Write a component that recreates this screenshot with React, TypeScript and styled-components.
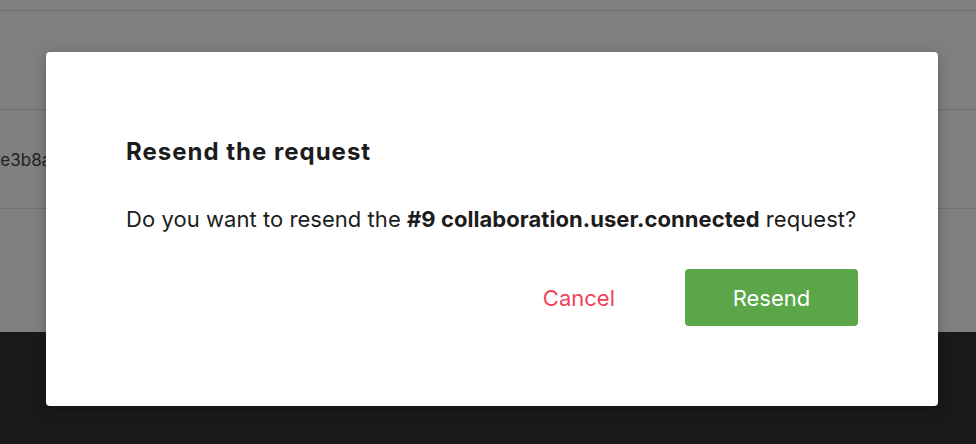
import React from 'react';
import styled, { createGlobalStyle } from 'styled-components';

const GlobalStyle = createGlobalStyle`
  html, body {
    margin: 0;
    padding: 0;
    background: #333333;
    font-family: Inter, "Noto Sans", sans-serif;
    -webkit-font-smoothing: antialiased;
  }
`;

const Page = styled.div`
  position: relative;
  width: 976px;
  height: 444px;
  overflow: hidden;
  display: flex;
  flex-direction: column;
`;

const RequestList = styled.div`
  background: #ffffff;
  height: 332px;
  display: flex;
  flex-direction: column;
  padding-top: 10px;
  box-sizing: border-box;
`;

const Row = styled.div`
  height: 99px;
  border-top: 1px solid #dedede;
  box-sizing: border-box;
  display: flex;
  align-items: center;
  font-size: 17px;
  color: #444444;
  white-space: nowrap;
`;

const HashCell = styled.span`
  margin-left: -10px;
  margin-top: 2px;
`;

const Footer = styled.div`
  flex: 1;
  background: #333333;
`;

const Overlay = styled.div`
  position: absolute;
  inset: 0;
  background: rgba(0, 0, 0, 0.5);
  padding: 52px 38px 38px 46px;
  box-sizing: border-box;
`;

const Modal = styled.div`
  background: #ffffff;
  border-radius: 4px;
  box-shadow: 0 3px 12px rgba(0, 0, 0, 0.25);
  height: 354px;
  box-sizing: border-box;
  padding: 80px;
  display: flex;
  flex-direction: column;
`;

const Title = styled.h2`
  margin: 0;
  font-size: 24px;
  letter-spacing: 1px;
  line-height: 40px;
  font-weight: 700;
  color: #1c1c1c;
`;

const Message = styled.p`
  margin: 33px 0 0;
  font-size: 22px;
  letter-spacing: 0.05px;
  line-height: 28px;
  color: #1c1c1c;

  b {
    font-weight: 700;
  }
`;

const Actions = styled.div`
  margin-top: auto;
  display: flex;
  justify-content: flex-end;
  align-items: center;
  gap: 70px;
`;

const Button = styled.button<{ $primary?: boolean }>`
  font-family: inherit;
  font-size: 22px;
  border: none;
  border-radius: 4px;
  cursor: pointer;
  height: 57px;
  padding: 0;
  width: ${({ $primary }) => ($primary ? '173px' : 'auto')};
  background: ${({ $primary }) => ($primary ? '#5aa649' : 'transparent')};
  color: ${({ $primary }) => ($primary ? '#ffffff' : '#f0435d')};
`;

const App = () => {
  return (
    <>
      <GlobalStyle />
      <Page>
        <RequestList>
          <Row />
          <Row>
            <HashCell>5e3b8a1c7d</HashCell>
          </Row>
          <Row />
        </RequestList>
        <Footer />
        <Overlay>
          <Modal>
            <Title>Resend the request</Title>
            <Message>
              Do you want to resend the <b>#9 collaboration.user.connected</b> request?
            </Message>
            <Actions>
              <Button>Cancel</Button>
              <Button $primary>Resend</Button>
            </Actions>
          </Modal>
        </Overlay>
      </Page>
    </>
  );
};

export default App;
